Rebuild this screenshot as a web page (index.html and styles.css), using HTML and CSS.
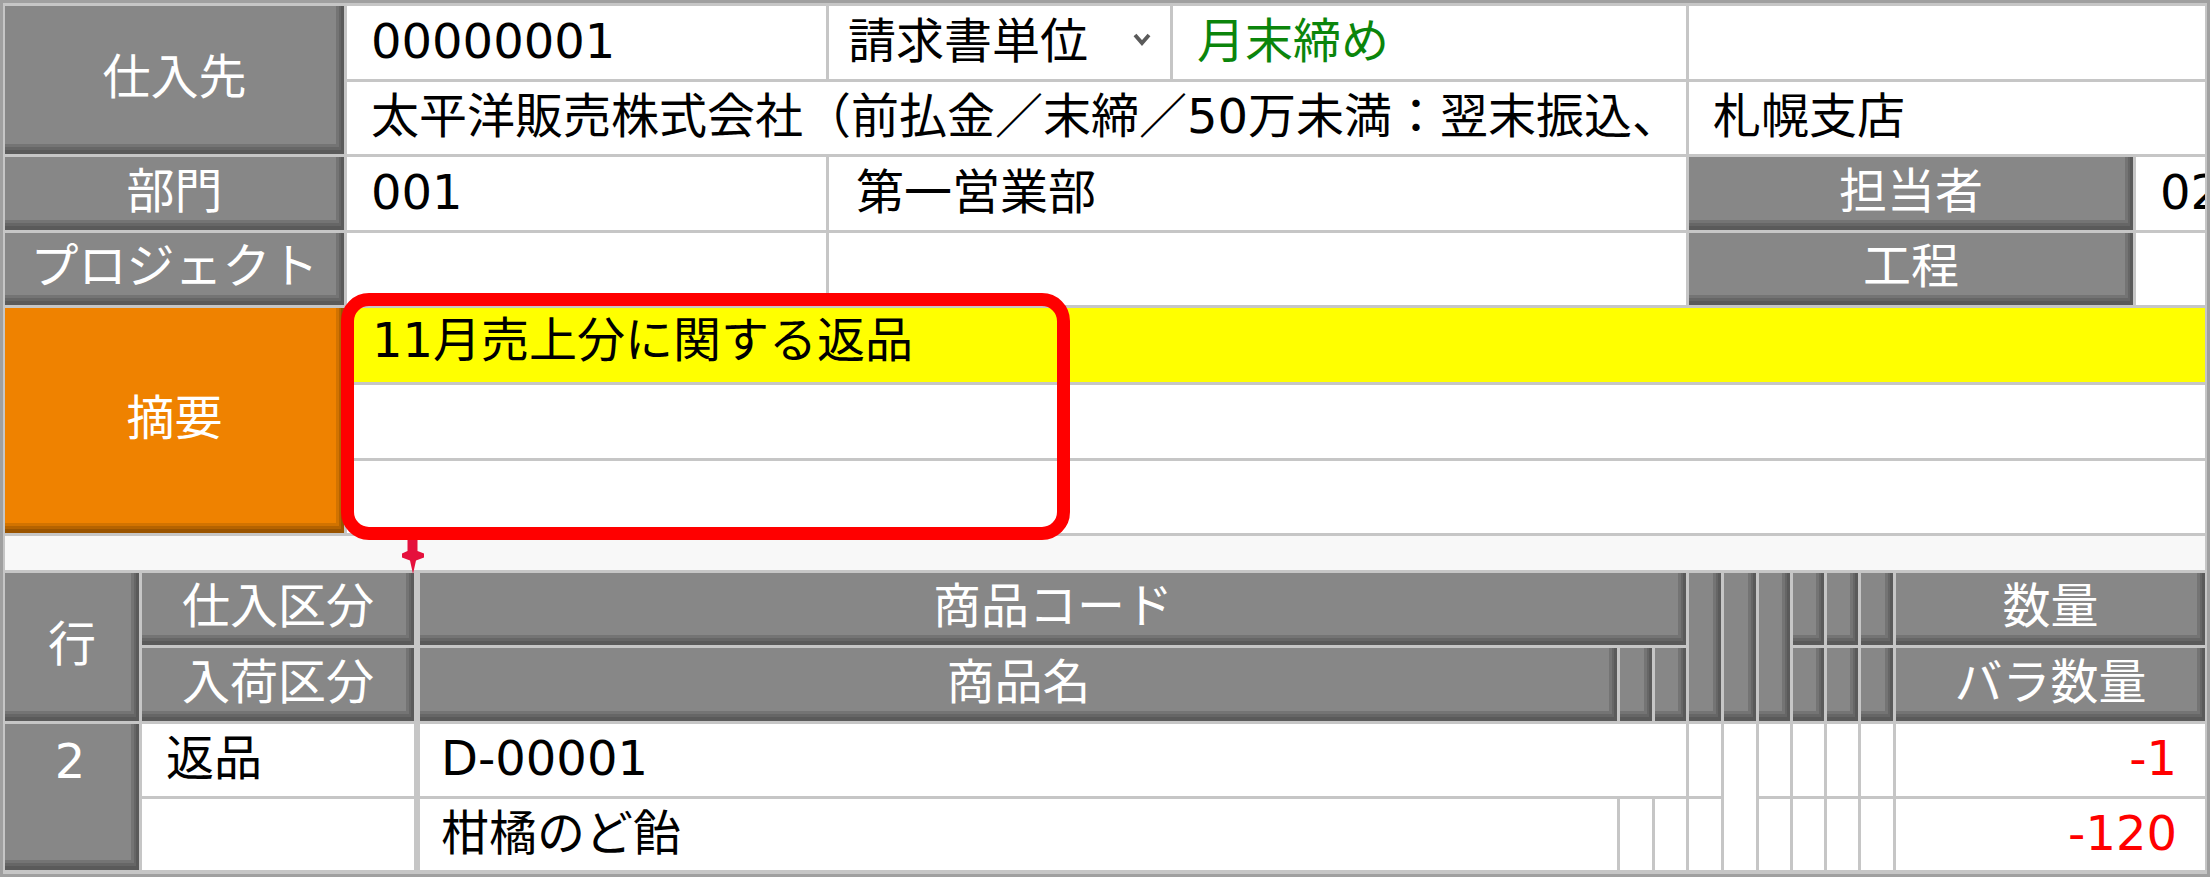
FILE: index.html
```html
<!DOCTYPE html>
<html lang="ja">
<head>
<meta charset="utf-8">
<title>仕入伝票</title>
<link rel="stylesheet" href="styles.css">
</head>
<body>
<div class="frame">
  <div class="top">
    <div class="hd a-r12">仕入先</div>
    <div class="cell">00000001</div>
    <div class="cell sel"><span>請求書単位</span><svg class="chev" width="18" height="15" viewBox="0 0 18 15"><polyline points="2,3 9,11 16,3" fill="none" stroke="#5a5a5a" stroke-width="3.8"/></svg></div>
    <div class="cell green">月末締め</div>
    <div class="cell ef"></div>
    <div class="cell bd">太平洋販売株式会社（前払金／末締／50万未満：翌末振込、</div>
    <div class="cell ef">札幌支店</div>
    <div class="hd">部門</div>
    <div class="cell">001</div>
    <div class="cell cd wide">第一営業部</div>
    <div class="hd">担当者</div>
    <div class="cell">02</div>
    <div class="hd">プロジェクト</div>
    <div class="cell"></div>
    <div class="cell cd"></div>
    <div class="hd">工程</div>
    <div class="cell"></div>
  </div>

  <div class="summary">
    <div class="hd orange">摘要</div>
    <div class="cell yellow">11月売上分に関する返品</div>
    <div class="cell"></div>
    <div class="cell"></div>
  </div>

  <div class="band"></div>

  <div class="lines">
    <div class="hd g-row c1">行</div>
    <div class="hd c2">仕入区分</div>
    <div class="hd c35 ml">商品コード</div>
    <div class="hd g-hspan c6"></div>
    <div class="hd g-hspan c7"></div>
    <div class="hd g-hspan c8"></div>
    <div class="hd c9"></div>
    <div class="hd c10"></div>
    <div class="hd c11"></div>
    <div class="hd c12">数量</div>

    <div class="hd c2 r2">入荷区分</div>
    <div class="hd c3 r2 ml">商品名</div>
    <div class="hd c4 r2"></div>
    <div class="hd c5 r2"></div>
    <div class="hd c9 r2"></div>
    <div class="hd c10 r2"></div>
    <div class="hd c11 r2"></div>
    <div class="hd c12 r2">バラ数量</div>

    <div class="hd d-row c1 rownum">2</div>
    <div class="cell c2 r3">返品</div>
    <div class="cell c35 r3 ml">D-00001</div>
    <div class="cell c6 r3"></div>
    <div class="cell d-span c7"></div>
    <div class="cell c8 r3"></div>
    <div class="cell c9 r3"></div>
    <div class="cell c10 r3"></div>
    <div class="cell c11 r3"></div>
    <div class="cell c12 r3 num">-1</div>

    <div class="cell c2 r4"></div>
    <div class="cell c3 r4 ml">柑橘のど飴</div>
    <div class="cell c4 r4"></div>
    <div class="cell c5 r4"></div>
    <div class="cell c6 r4"></div>
    <div class="cell c8 r4"></div>
    <div class="cell c9 r4"></div>
    <div class="cell c10 r4"></div>
    <div class="cell c11 r4"></div>
    <div class="cell c12 r4 num">-120</div>
  </div>

  <div class="callout"></div>
  <svg class="pin" width="26" height="34" viewBox="0 0 26 34"><path d="M7.5 0 H17.5 V11 L24 13.5 V17.5 L16 20.5 L13 34 L10 20.5 L2 17.5 V13.5 L7.5 11 Z" fill="#e5103c"/></svg>
</div>
</body>
</html>
```

FILE: styles.css
```css
* {
  box-sizing: border-box;
}

html,
body {
  margin: 0;
  padding: 0;
  background: #ffffff;
}

body {
  width: 2210px;
  height: 877px;
  overflow: hidden;
  font-family: "DejaVu Sans", "Noto Sans CJK JP", sans-serif;
  font-size: 48px;
  color: #000000;
}

.frame {
  position: relative;
  width: 2210px;
  height: 877px;
  border: 3px solid #a0a0a0;
  background: #c6c6c6;
  padding: 3px 2px 4px 2px;
  display: flex;
  flex-direction: column;
  gap: 3px;
}

/* ---------- generic cells ---------- */
.cell {
  background: #ffffff;
  display: flex;
  align-items: center;
  padding: 0 0 4px 24px;
  white-space: nowrap;
  overflow: hidden;
  line-height: 48px;
}

.hd {
  background: #878787;
  color: #ffffff;
  display: flex;
  align-items: center;
  justify-content: center;
  padding-bottom: 6px;
  white-space: nowrap;
  overflow: hidden;
  line-height: 48px;
  box-shadow:
    inset -3px -4px 0 #5a5a5a,
    inset -5px -7px 0 #666666,
    inset -8px -10px 0 #747474;
}

/* ---------- top header area ---------- */
.top {
  display: grid;
  grid-template-columns: 339px 479px 341px 513px 444px 1fr;
  grid-template-rows: 73px 72px 73px 72px;
  gap: 3px;
}

.a-r12 {
  grid-row: 1 / span 2;
}

.ef {
  grid-column: 5 / span 2;
}

.bd {
  grid-column: 2 / span 3;
}

.cd {
  grid-column: 3 / span 2;
}

.wide {
  padding-left: 27px;
}

.sel {
  justify-content: space-between;
  padding-left: 19px;
  padding-right: 19px;
}

.chev {
  margin-bottom: 2px;
  flex: none;
}

.green {
  color: #0b850b;
}

/* ---------- summary ---------- */
.summary {
  display: grid;
  grid-template-columns: 339px 1fr;
  grid-template-rows: 74px 73px 72px;
  gap: 3px;
}

.orange {
  grid-row: 1 / span 3;
  background: #ef8200;
  box-shadow:
    inset -3px -4px 0 #9a5400,
    inset -5px -7px 0 #b56300,
    inset -8px -10px 0 #d27300;
}

.yellow {
  background: #ffff00;
  padding-bottom: 10px;
  padding-left: 25px;
}

.band {
  height: 34px;
  background: #f8f8f8;
  flex: none;
}

/* ---------- line items ---------- */
.lines {
  display: grid;
  grid-template-columns: 134px 272px 1200px 32px 31px 32px 32px 31px 31px 31px 32px 1fr;
  grid-template-rows: 72px 73px 72px 71px;
  gap: 3px;
}

.ml {
  margin-left: 3px;
  padding-left: 21px;
}

.hd.ml {
  padding-left: 0;
}

.c1 { grid-column: 1; }
.c2 { grid-column: 2; }
.c3 { grid-column: 3; }
.c35 { grid-column: 3 / span 3; }
.c4 { grid-column: 4; }
.c5 { grid-column: 5; }
.c6 { grid-column: 6; }
.c7 { grid-column: 7; }
.c8 { grid-column: 8; }
.c9 { grid-column: 9; }
.c10 { grid-column: 10; }
.c11 { grid-column: 11; }
.c12 { grid-column: 12; }

.r2 { grid-row: 2; }
.r3 { grid-row: 3; }
.r4 { grid-row: 4; }

.g-row {
  grid-row: 1 / span 2;
}

.g-hspan {
  grid-row: 1 / span 2;
}

.d-row {
  grid-row: 3 / span 2;
}

.d-span {
  grid-row: 3 / span 2;
}

.rownum {
  align-items: flex-start;
  padding-top: 13px;
  padding-right: 4px;
}

.lines .cell {
  padding-left: 24px;
}

.lines .cell.ml {
  padding-left: 21px;
}

.num {
  justify-content: flex-end;
  color: #ff0000;
  padding-right: 28px;
}

/* ---------- overlays ---------- */
.callout {
  position: absolute;
  left: 338px;
  top: 290px;
  width: 729px;
  height: 247px;
  border: 13px solid #ff0000;
  border-radius: 28px;
  pointer-events: none;
}

.pin {
  position: absolute;
  left: 397px;
  top: 537px;
}
```
